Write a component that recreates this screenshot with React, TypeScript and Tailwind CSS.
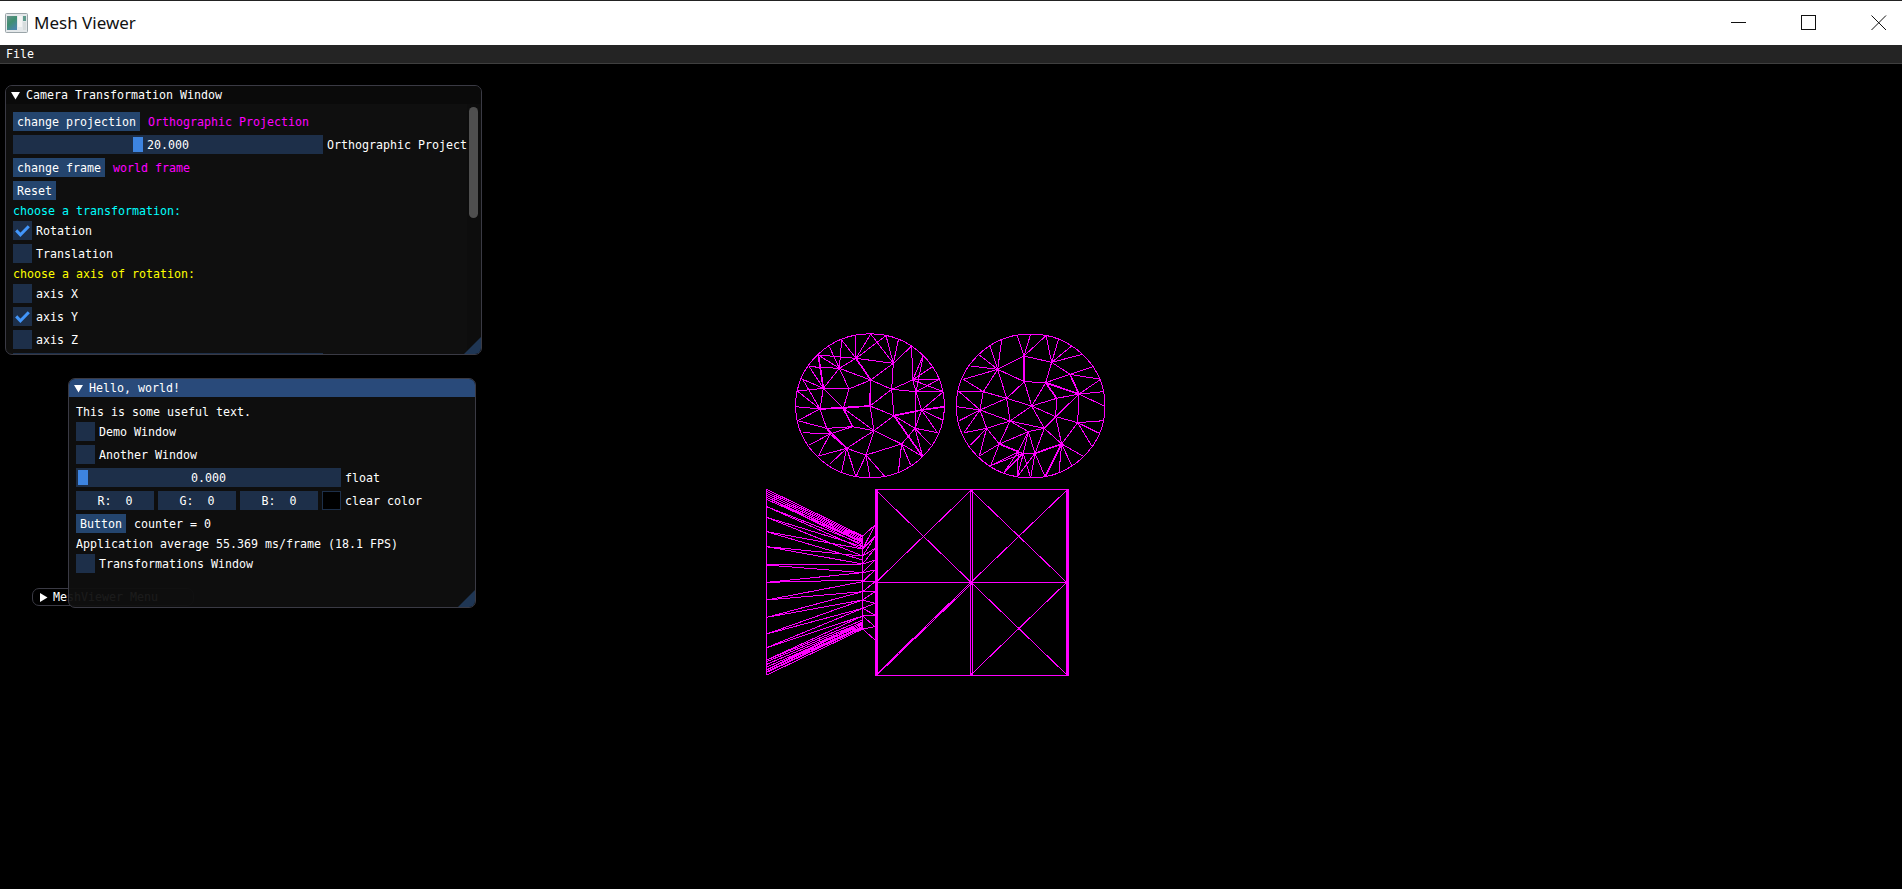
import type { ReactNode } from "react";

const btnCls = "flex h-[19px] shrink-0 items-center justify-center bg-[#24456e] px-[4px] pt-[2px]";
const frameCls = "relative flex h-[19px] shrink-0 items-center justify-center bg-[#1d2f49] pt-[2px]";
const rowCls = "flex h-[19px] shrink-0 items-center whitespace-nowrap";
const textRowCls = "h-[13px] shrink-0 whitespace-nowrap leading-[15px]";

// all mesh points are in 3x crop units, the svg viewBox scales them back to 1px
type Pt = [number, number];

const C1_OUTER: Pt[] = [[185,60],[225,47],[272,42],[318,47],[355,60],[395,78],[430,105],[458,140],[478,178],[490,215],[493,260],[488,300],[472,338],[452,375],[428,410],[392,435],[355,457],[315,470],[270,473],[228,470],[185,455],[150,432],[115,408],[88,375],[68,338],[53,302],[47,260],[52,213],[68,178],[88,140],[115,105],[148,80]];
const C1_HUBS: Record<string, Pt> = {
  A: [228,115], B: [340,130], C: [272,180], D: [178,145], E: [130,205], F: [207,207], G: [335,208], H: [398,180], I: [408,215],
  J: [120,267], K: [190,265], L: [270,258], M: [425,270], N: [342,287], O: [140,325], P: [218,320], Q: [282,332], R: [405,325],
  S: [200,385], T: [258,405], U: [365,372], V: [150,342],
};
const C1_EDGES = "A-0 A-1 A-2 A-3 A-B A-C A-D 0-D 31-D 30-D 30-E 2-B 3-B 4-B 5-B 5-H 6-H 6-I 7-H 8-H 9-I 9-H C-B C-D C-F C-G C-L D-F D-E E-F E-J E-K F-K K-J K-L J-L L-G L-N G-B G-N G-I I-H I-M N-M N-R R-M M-10 M-11 M-12 M-9 R-12 R-13 R-14 N-14 N-Q Q-L Q-K Q-P P-K P-O Q-U U-R U-14 U-15 U-16 U-T Q-T Q-S T-17 T-18 T-19 S-T S-19 S-20 S-21 S-22 S-O O-J O-V V-23 V-24 V-P O-25 J-25 J-26 J-27 J-28 E-28 E-29 E-27 29-D V-22 V-S I-8 H-9 30-A G-H I-R";
const C1_THICK = "J-L A-C 30-E N-14 M-10 C-L N-M K-P";

const C2_OUTER: Pt[] = [[665,60],[712,47],[752,42],[798,47],[835,60],[875,78],[908,103],[940,140],[962,178],[972,215],[976,260],[972,302],[958,340],[935,378],[908,408],[875,437],[837,457],[795,470],[752,474],[712,470],[672,457],[632,437],[598,408],[572,375],[552,338],[538,302],[530,260],[535,213],[550,178],[572,138],[598,105],[630,78]];
const C2_HUBS: Record<string, Pt> = {
  a: [732,108], b: [815,127], c: [653,148], d: [733,185], e: [797,188], f: [870,163], g: [897,222], h: [830,235], i: [680,235],
  j: [610,215], k: [755,258], l: [600,270], m: [827,290], n: [690,303], o: [893,308], p: [620,325], q: [793,325], r: [745,335],
  s: [845,372], t: [658,372], u: [715,395], v: [730,400], w: [765,400],
};
const C2_EDGES = "a-1 a-2 a-3 a-b a-c a-d b-3 b-4 b-5 b-6 b-f b-e c-0 c-31 c-30 c-29 c-28 c-j c-i c-d d-e d-i d-k e-f e-h e-k f-g f-7 f-8 g-8 g-9 g-10 g-h g-o g-m h-k h-m k-i k-n k-m k-q i-l i-j i-n j-27 j-28 j-l l-26 l-25 l-27 l-p l-n l-24 p-n p-24 p-23 p-22 p-t n-t n-r n-q r-q r-u r-w q-s q-m q-w m-o m-s o-11 o-12 o-13 o-s s-14 s-15 s-16 s-w s-17 t-u t-22 t-21 u-v v-w v-21 v-20 v-19 v-18 w-18 w-17 w-19 u-19 u-20 u-21 v-r t-r w-s";
const C2_THICK = "a-d s-17 g-f g-e u-t e-h w-s";

const RAYS: Pt[] = [[52,186],[52,198],[80,192],[80,207],[112,200],[112,228],[155,207],[155,240],[200,228],[200,252],[255,252],[255,278],[307,300],[307,278],[360,335],[360,305],[412,360],[412,335],[462,385],[462,360],[503,408],[503,385],[540,420],[540,408],[570,430],[570,425],[585,447],[575,440]];
const NECK_L = [168,207,228,252,278,305,335,360,385,408,447];
const NECK_R = [135,170,205,240,270,305,335,370,405,440,480];

function edgesPath(outer: Pt[], hubs: Record<string, Pt>, edges: string) {
  const get = (k: string) => hubs[k] ?? outer[Number(k)];
  return edges
    .split(" ")
    .map((e) => {
      const [a, b] = e.split("-").map(get);
      return `M${a[0]} ${a[1]}L${b[0]} ${b[1]}`;
    })
    .join("");
}

function funnelPath() {
  let d = "M50 28V585M338 168V447M375 135V480M338 168L375 135M338 447L375 480";
  RAYS.forEach(([l, r]) => (d += `M50 ${l}L338 ${r}`));
  for (let i = 0; i < 6; i++) {
    d += `M50 ${28 + i * 6}L338 ${168 + i * 4}`;
    d += `M50 ${585 - i * 8}L338 ${447 - i * 4}`;
  }
  NECK_L.forEach((y, i) => {
    d += `M338 ${y}L375 ${NECK_R[i]}`;
    if (i > 0) d += `M338 ${y}L375 ${NECK_R[i - 1]}`;
  });
  return d;
}

const SQUARE =
  "M375 28H955V587H375ZM660 28V587M666 28V587M375 307H955" +
  "M378 31L663 307M663 31L378 307M663 31L950 307M950 31L663 307M378 584L663 307M382 584L666 310M663 307L950 584M950 307L663 584";

function Tri({ open }: { open?: boolean }) {
  return (
    <svg width="9" height="9" viewBox="0 0 9 9" className="shrink-0">
      <polygon points={open ? "0,1 9,1 4.5,8.5" : "1,0 8.5,4.5 1,9"} fill="#ffffff" />
    </svg>
  );
}

function Check({ on, label }: { on?: boolean; label: string }) {
  return (
    <div className={rowCls}>
      <div className="h-[19px] w-[19px] shrink-0 bg-[#1d2f49]">
        {on && (
          <svg width="19" height="19" viewBox="0 0 19 19">
            <path d="M3.2 9.4L7.4 13.8L15.8 5.2" fill="none" stroke="#4296fa" strokeWidth="3" />
          </svg>
        )}
      </div>
      <span className="ml-[4px] pt-[2px]">{label}</span>
    </div>
  );
}

function Grip() {
  return (
    <svg width="17" height="17" viewBox="0 0 17 17" className="absolute right-0 bottom-0">
      <polygon points="17,0 17,17 0,17" fill="#1f3654" />
    </svg>
  );
}

function ImWindow({ className, title, titleCls, children }: { className: string; title: string; titleCls: string; children: ReactNode }) {
  return (
    <div className={`absolute flex flex-col overflow-hidden rounded-[7px] border border-[#3a3a44] ${className}`}>
      <div className={`flex h-[18px] shrink-0 items-center gap-[6px] pl-[5px] ${titleCls}`}>
        <Tri open />
        <span className="pt-[2px]">{title}</span>
      </div>
      {children}
      <Grip />
    </div>
  );
}

export default function App() {
  return (
    <div className="flex h-screen flex-col overflow-hidden bg-black font-['DejaVu_Sans_Mono',monospace] text-[11.63px] text-white">
      {/* native title bar */}
      <div className="flex h-[45px] shrink-0 items-center border-t border-[#222222] bg-white font-['Noto_Sans',sans-serif] text-[17px] text-[#111111]">
        <svg width="23" height="20" viewBox="0 0 23 20" className="ml-[5px] shrink-0">
          <defs>
            <linearGradient id="ico" x1="0" y1="0" x2="0.6" y2="1">
              <stop offset="0" stopColor="#6a8f8c" />
              <stop offset="0.5" stopColor="#3f8f70" />
              <stop offset="1" stopColor="#4a86a8" />
            </linearGradient>
          </defs>
          <rect x="0.5" y="0.5" width="22" height="19" rx="1" fill="#e4e8ea" stroke="#9aa4a8" />
          <rect x="2" y="3" width="10" height="14" fill="url(#ico)" />
          <rect x="13" y="3" width="4" height="11" fill="#f4f4f4" />
          <rect x="18" y="3" width="3" height="5" fill="#5f9a8c" />
          <rect x="18" y="9" width="3" height="8" fill="#d7dcdd" />
        </svg>
        <span className="ml-[6px]">Mesh Viewer</span>
        <div className="ml-auto mr-[15px] flex items-center gap-[54px]">
          <svg width="16" height="16" viewBox="0 0 16 16"><path d="M0 7.5H15" stroke="#111" fill="none" /></svg>
          <svg width="16" height="16" viewBox="0 0 16 16"><rect x="0.5" y="0.5" width="14" height="14" stroke="#111" fill="none" /></svg>
          <svg width="16" height="16" viewBox="0 0 16 16"><path d="M0.5 0.5L15 15M15 0.5L0.5 15" stroke="#111" fill="none" /></svg>
        </div>
      </div>

      {/* menu bar */}
      <div className="flex h-[19px] shrink-0 items-center border-b border-[#3f3f3f] bg-[#242424] pl-[6px] pt-[2px]">File</div>

      {/* gl viewport */}
      <div className="relative flex-1">
        <svg width="340" height="170" viewBox="0 0 1020 510" shapeRendering="crispEdges" className="absolute left-[780px] top-[256px]">
          <g fill="none" stroke="#ff00ff" strokeWidth="3">
            <ellipse cx="270" cy="257.5" rx="223" ry="216" />
            <ellipse cx="752" cy="258" rx="223" ry="216" />
            <path d={edgesPath(C1_OUTER, C1_HUBS, C1_EDGES)} />
            <path d={edgesPath(C2_OUTER, C2_HUBS, C2_EDGES)} />
            <path strokeWidth="5" d={edgesPath(C1_OUTER, C1_HUBS, C1_THICK)} />
            <path strokeWidth="5" d={edgesPath(C2_OUTER, C2_HUBS, C2_THICK)} />
          </g>
        </svg>
        <svg width="340" height="200" viewBox="0 0 1020 600" shapeRendering="crispEdges" className="absolute left-[750px] top-[416px]">
          <g fill="none" stroke="#ff00ff" strokeWidth="3">
            <path d={funnelPath()} />
            <path d={SQUARE} />
          </g>
          <rect x="374" y="27" width="9" height="561" fill="#ff00ff" />
          <rect x="948" y="27" width="9" height="561" fill="#ff00ff" />
        </svg>

        {/* collapsed window sits behind Hello, world! */}
        <div className="absolute left-[32px] top-[524px] flex h-[18px] w-[162px] items-center gap-[5px] rounded-[7px] border border-[#3a3a44] bg-black pl-[6px]">
          <Tri />
          <span className="pt-[2px]">MeshViewer Menu</span>
        </div>

        <ImWindow className="left-[5px] top-[21px] h-[270px] w-[477px] bg-[#0f0f0f]" title="Camera Transformation Window" titleCls="bg-[#0a0a0a]">
          <div className="flex min-h-0 flex-1">
            <div className="flex min-w-0 flex-1 flex-col gap-[4px] overflow-hidden pl-[7px] pr-[2px] pt-[8px]">
              <div className={rowCls}>
                <div className={btnCls}>change projection</div>
                <span className="ml-[8px] pt-[2px] text-[#ff00ff]">Orthographic Projection</span>
              </div>
              <div className={rowCls}>
                <div className={`${frameCls} w-[310px]`}>
                  <div className="absolute left-[120px] top-[2px] h-[15px] w-[10px] bg-[#3d84e0]" />
                  <span className="relative">20.000</span>
                </div>
                <span className="ml-[4px] pt-[2px]">Orthographic Projection</span>
              </div>
              <div className={rowCls}>
                <div className={btnCls}>change frame</div>
                <span className="ml-[8px] pt-[2px] text-[#ff00ff]">world frame</span>
              </div>
              <div className={rowCls}>
                <div className={btnCls}>Reset</div>
              </div>
              <div className={`${textRowCls} text-[#00ffff]`}>choose a transformation:</div>
              <Check on label="Rotation" />
              <Check label="Translation" />
              <div className={`${textRowCls} text-[#ffff00]`}>choose a axis of rotation:</div>
              <Check label="axis X" />
              <Check on label="axis Y" />
              <Check label="axis Z" />
              <div className={`${frameCls} w-[310px]`} />
            </div>
            <div className="w-[14px] shrink-0 bg-[#0d0d0d] pl-[2px] pt-[3px]">
              <div className="h-[111px] w-[9px] rounded-full bg-[#4f4f4f]" />
            </div>
          </div>
        </ImWindow>

        <ImWindow className="left-[68px] top-[314px] h-[230px] w-[408px] bg-[#0f0f0f]/95" title="Hello, world!" titleCls="bg-[#294a7a]">
          <div className="flex flex-col gap-[4px] pl-[7px] pt-[8px]">
            <div className={textRowCls}>This is some useful text.</div>
            <Check label="Demo Window" />
            <Check label="Another Window" />
            <div className={rowCls}>
              <div className={`${frameCls} w-[265px]`}>
                <div className="absolute left-[2px] top-[2px] h-[15px] w-[10px] bg-[#3d84e0]" />
                <span>0.000</span>
              </div>
              <span className="ml-[4px] pt-[2px]">float</span>
            </div>
            <div className={`${rowCls} gap-[4px]`}>
              <div className={`${frameCls} w-[78px]`}>R:&nbsp;&nbsp;0</div>
              <div className={`${frameCls} w-[78px]`}>G:&nbsp;&nbsp;0</div>
              <div className={`${frameCls} w-[78px]`}>B:&nbsp;&nbsp;0</div>
              <div className="h-[19px] w-[19px] border border-[#1d2f49] bg-black" />
              <span className="pt-[2px]">clear color</span>
            </div>
            <div className={rowCls}>
              <div className={btnCls}>Button</div>
              <span className="ml-[8px] pt-[2px]">counter = 0</span>
            </div>
            <div className={textRowCls}>Application average 55.369 ms/frame (18.1 FPS)</div>
            <Check label="Transformations Window" />
          </div>
        </ImWindow>
      </div>
    </div>
  );
}
